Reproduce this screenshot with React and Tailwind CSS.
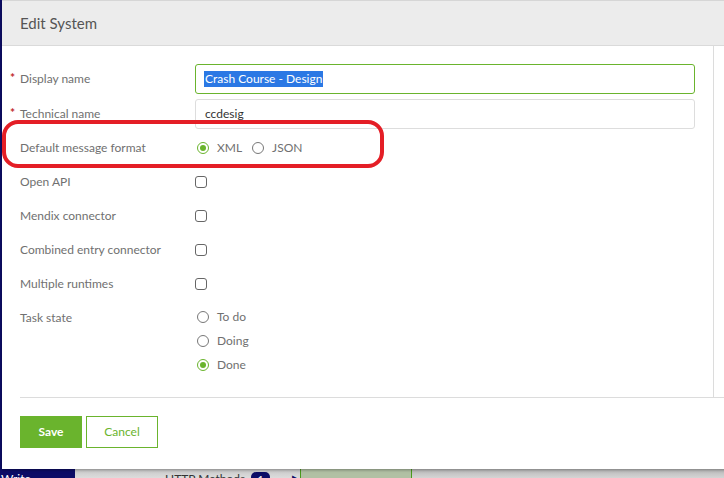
import React from "react";

const font = { fontFamily: "Lato, 'Open Sans', sans-serif" };

function Radio({ checked }) {
  return (
    <span
      className={`inline-flex items-center justify-center w-[12px] h-[12px] rounded-full border ${
        checked ? "border-[#6ab42d]" : "border-[#777]"
      } bg-white`}
    >
      {checked && <span className="w-[6px] h-[6px] rounded-full bg-[#6ab42d]" />}
    </span>
  );
}

function Checkbox() {
  return <span className="inline-block w-[12px] h-[12px] rounded-[3px] border border-[#666] bg-white" />;
}

function Row({ label, required, children, className = "h-[34px] items-center" }) {
  return (
    <div className={`flex ${className}`}>
      <div className="relative w-[193px] shrink-0 pl-[18px] text-[12px] text-[#707070]">
        {required && (
          <span className="absolute left-[8px] top-[1px] text-[#c0282d] text-[12px] font-bold leading-[14px]">*</span>
        )}
        {label}
      </div>
      <div className="flex-1 pr-[18px]">{children}</div>
    </div>
  );
}

export default function App() {
  return (
    <div className="relative w-[724px] h-[478px] overflow-hidden bg-[#0c0c66]" style={font}>
      {/* background page strip */}
      <div className="absolute left-0 right-0 bottom-0 h-[9px] flex text-[12px] leading-[19px] whitespace-nowrap">
        <div className="w-[75px] bg-[#0c0c66] text-white pl-[1px] overflow-hidden">Write</div>
        <div className="w-[225px] flex items-start bg-gradient-to-b from-[#c8c8c8] to-[#dcdcdc] text-[#333] overflow-hidden">
          <span className="ml-[90px]">HTTP Methods</span>
          <span className="ml-[6px] mt-[3px] w-[22px] h-[10px] rounded-full bg-[#0c0c66] text-white text-[10px] leading-[14px] text-center">1</span>
          <span className="ml-[22px] text-[#0c0c66] text-[10px]">▶</span>
        </div>
        <div className="w-[112px] bg-[#b1c0a4] border-l border-r border-[#4a9a1c]" />
        <div className="flex-1 bg-gradient-to-b from-[#b8b8b8] to-[#d4d4d4]" />
      </div>

      {/* modal */}
      <div className="absolute left-[2px] top-0 w-[730px] h-[469px] bg-white border-t border-[#d6d6d6] shadow-[0_1px_3px_rgba(0,0,0,0.35)] flex flex-col">
        <div className="h-[45px] bg-[#ececec] border-b border-[#dadada] flex items-center pl-[18px] text-[15px] text-[#555]">
          Edit System
        </div>
        <div className="w-[712px] h-[351px] border-r border-[#dcdcdc] pt-[18px]">
          <Row label="Display name" required className="h-[30px] items-center">
            <div className="h-[30px] rounded-[3px] border border-[#6ab42d] flex items-center pl-[8px] text-[12px]">
              <span className="bg-[#2b78e4] text-white px-[1px] leading-[16px]">Crash Course - Design</span>
            </div>
          </Row>
          <div className="h-[5px]" />
          <Row label="Technical name" required className="h-[30px] items-center">
            <div className="h-[30px] rounded-[3px] border border-[#dddddd] flex items-center pl-[9px] text-[12px] text-[#333]">
              ccdesig
            </div>
          </Row>
          <div className="h-[2px]" />
          <Row label="Default message format">
            <div className="flex items-center ml-[2px] text-[12px] text-[#707070]">
              <Radio checked />
              <span className="ml-[8px]">XML</span>
              <span className="ml-[10px] flex"><Radio /></span>
              <span className="ml-[8px]">JSON</span>
            </div>
          </Row>
          <Row label="Open API"><div className="flex items-center"><Checkbox /></div></Row>
          <Row label="Mendix connector"><div className="flex items-center"><Checkbox /></div></Row>
          <Row label="Combined entry connector"><div className="flex items-center"><Checkbox /></div></Row>
          <Row label="Multiple runtimes"><div className="flex items-center"><Checkbox /></div></Row>
          <Row label="Task state" className="items-start leading-[34px]">
            <div className="flex flex-col pt-[4px] ml-[2px] text-[12px] text-[#707070] leading-normal">
              {[["To do", false], ["Doing", false], ["Done", true]].map(([t, c]) => (
                <div key={t} className="h-[24px] flex items-center">
                  <Radio checked={c} />
                  <span className="ml-[8px]">{t}</span>
                </div>
              ))}
            </div>
          </Row>
        </div>
        <div className="pl-[18px]">
          <div className="border-t border-[#dcdcdc] pt-[18px] flex gap-[4px]">
            <button className="w-[62px] h-[32px] bg-[#6ab42d] text-white text-[12px] font-bold">Save</button>
            <button className="w-[72px] h-[32px] border border-[#6ab42d] text-[#6ab42d] text-[12px] bg-white">Cancel</button>
          </div>
        </div>
      </div>

      {/* highlight */}
      <div className="absolute left-[2px] top-[120px] w-[382px] h-[48px] border-[4px] border-[#e41e26] rounded-[16px]" />
    </div>
  );
}
